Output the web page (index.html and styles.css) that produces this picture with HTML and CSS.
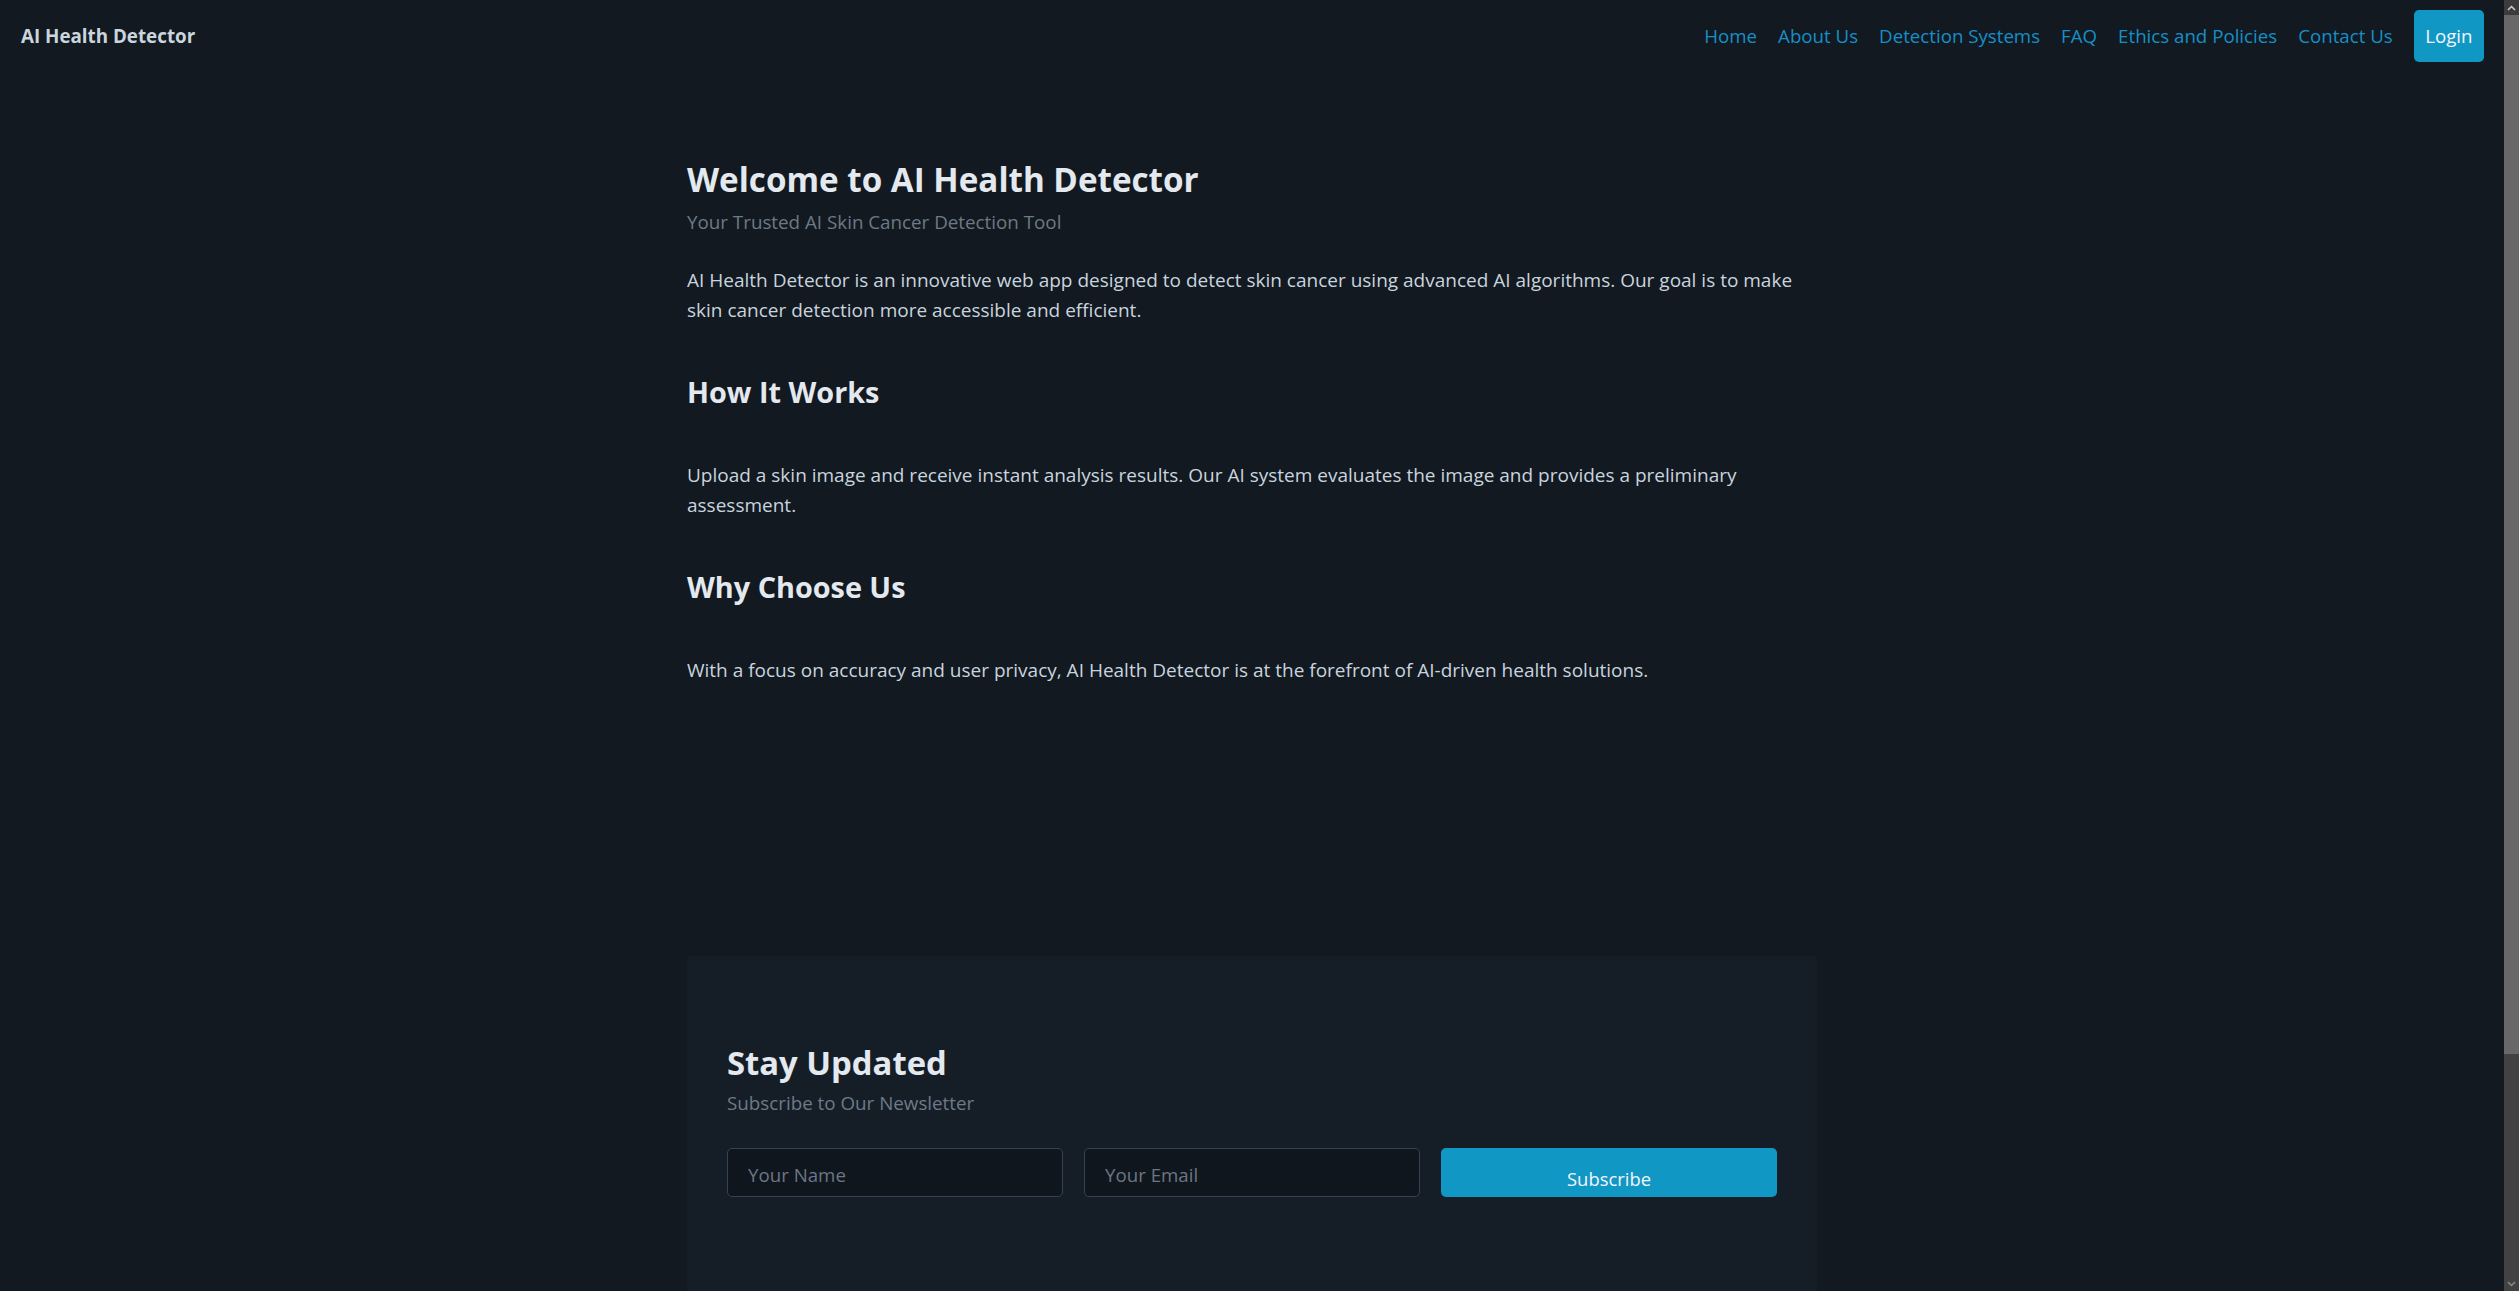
FILE: index.html
```html
<!DOCTYPE html>
<html lang="en">
<head>
<meta charset="utf-8">
<title>AI Health Detector</title>
<link rel="stylesheet" href="styles.css">
</head>
<body>
<header class="topbar">
  <a class="brand" href="#">AI Health Detector</a>
  <nav class="menu">
    <a class="menu-link" href="#">Home</a>
    <a class="menu-link" href="#">About Us</a>
    <a class="menu-link" href="#">Detection Systems</a>
    <a class="menu-link" href="#">FAQ</a>
    <a class="menu-link" href="#">Ethics and Policies</a>
    <a class="menu-link" href="#">Contact Us</a>
    <a class="login-btn" href="#">Login</a>
  </nav>
</header>
<main class="page">
  <section class="intro">
    <h1 class="title">Welcome to AI Health Detector</h1>
    <p class="lead">Your Trusted AI Skin Cancer Detection Tool</p>
    <p class="text">AI Health Detector is an innovative web app designed to detect skin cancer using advanced AI algorithms. Our goal is to make skin cancer detection more accessible and efficient.</p>
    <h2 class="section-title">How It Works</h2>
    <p class="text">Upload a skin image and receive instant analysis results. Our AI system evaluates the image and provides a preliminary assessment.</p>
    <h2 class="section-title">Why Choose Us</h2>
    <p class="text">With a focus on accuracy and user privacy, AI Health Detector is at the forefront of AI-driven health solutions.</p>
  </section>
  <section class="newsletter">
    <h2 class="news-title">Stay Updated</h2>
    <p class="news-lead">Subscribe to Our Newsletter</p>
    <form class="news-form">
      <input class="field" type="text" placeholder="Your Name">
      <input class="field" type="email" placeholder="Your Email">
      <button class="subscribe" type="button">Subscribe</button>
    </form>
  </section>
</main>
<div class="scrollbar" aria-hidden="true">
  <span class="sb-btn">
    <svg width="9" height="6" viewBox="0 0 9 6"><path d="M1 5 L4.5 1.5 L8 5" fill="none" stroke="#cfcfcf" stroke-width="1.5"/></svg>
  </span>
  <span class="sb-thumb"></span>
  <span class="sb-track"></span>
  <span class="sb-btn sb-btn-down">
    <svg width="9" height="6" viewBox="0 0 9 6"><path d="M1 1 L4.5 4.5 L8 1" fill="none" stroke="#8a8a8a" stroke-width="1.5"/></svg>
  </span>
</div>
</body>
</html>
```
FILE: styles.css
```css
html {
  background: #121920;
}
body {
  margin: 0;
  padding-right: 15px;
  min-height: 1567px;
  background: #121920;
  color: #c8d4df;
  font-family: "Open Sans", "Noto Sans", sans-serif;
  font-size: 19px;
  line-height: 30px;
}

.scrollbar {
  position: fixed;
  top: 0;
  right: 0;
  width: 15px;
  height: 100vh;
  display: flex;
  flex-direction: column;
  background: #424242;
}
.sb-btn {
  flex: 0 0 15px;
  display: flex;
  align-items: center;
  justify-content: center;
  background: #3c3c3c;
}
.sb-btn-down {
  background: #424242;
}
.sb-thumb {
  flex: 0 0 1039px;
  background: #686868;
}
.sb-track {
  flex: 1;
  background: #424242;
}

.topbar {
  height: 72px;
  padding: 0 20px 0 21px;
  display: flex;
  align-items: center;
  justify-content: space-between;
}
.brand {
  color: #cbd5de;
  font-weight: 700;
  font-size: 18.8px;
  text-decoration: none;
}
.menu {
  display: flex;
  align-items: center;
  gap: 21px;
  font-size: 18.7px;
}
.menu-link {
  color: #168fc8;
  text-decoration: none;
}
.login-btn {
  display: block;
  padding: 11px 11.5px;
  background: #1197c4;
  color: #f2f6f9;
  border-radius: 5px;
  text-decoration: none;
}

.page {
  width: 1130px;
  margin: 0 auto;
}
.intro {
  padding-top: 88px;
}
.title {
  margin: 0;
  color: #e4e9ef;
  font-size: 33.2px;
  line-height: 40px;
  font-weight: 700;
}
.lead {
  margin: 7px 0 0;
  color: #6d7986;
  font-size: 18.8px;
}
.text {
  margin: 28px 0 0;
}
.section-title {
  margin: 49px 0 50px;
  color: #e4e9ef;
  font-size: 28.8px;
  line-height: 36px;
  font-weight: 700;
}
.section-title + .text {
  margin-top: 0;
}

.newsletter {
  margin-top: 271px;
  padding: 40px 40px 135px;
  background: #151e27;
  border-radius: 5px;
}
.news-title {
  margin: 47px 0 0;
  color: #e4e9ef;
  font-size: 32.8px;
  line-height: 40px;
  font-weight: 700;
}
.news-lead {
  margin: 5px 0 0;
  color: #6d7986;
  font-size: 18.8px;
}
.news-form {
  margin-top: 30px;
  display: grid;
  grid-template-columns: repeat(3, 1fr);
  gap: 21px;
}
.field {
  box-sizing: border-box;
  height: 49px;
  margin: 0;
  padding: 3px 20px 0;
  background: #10161d;
  border: 1px solid #36424f;
  border-radius: 5px;
  color: #c8d4df;
  font-family: inherit;
  font-size: 18.7px;
  outline: none;
}
.field::placeholder {
  color: #6b7785;
}
.subscribe {
  box-sizing: border-box;
  height: 49px;
  margin: 0;
  padding: 16px 0 3px;
  background: #1197c4;
  border: 0;
  border-radius: 5px;
  color: #f2f6f9;
  font-family: inherit;
  font-size: 18.4px;
  line-height: 30px;
}
```
